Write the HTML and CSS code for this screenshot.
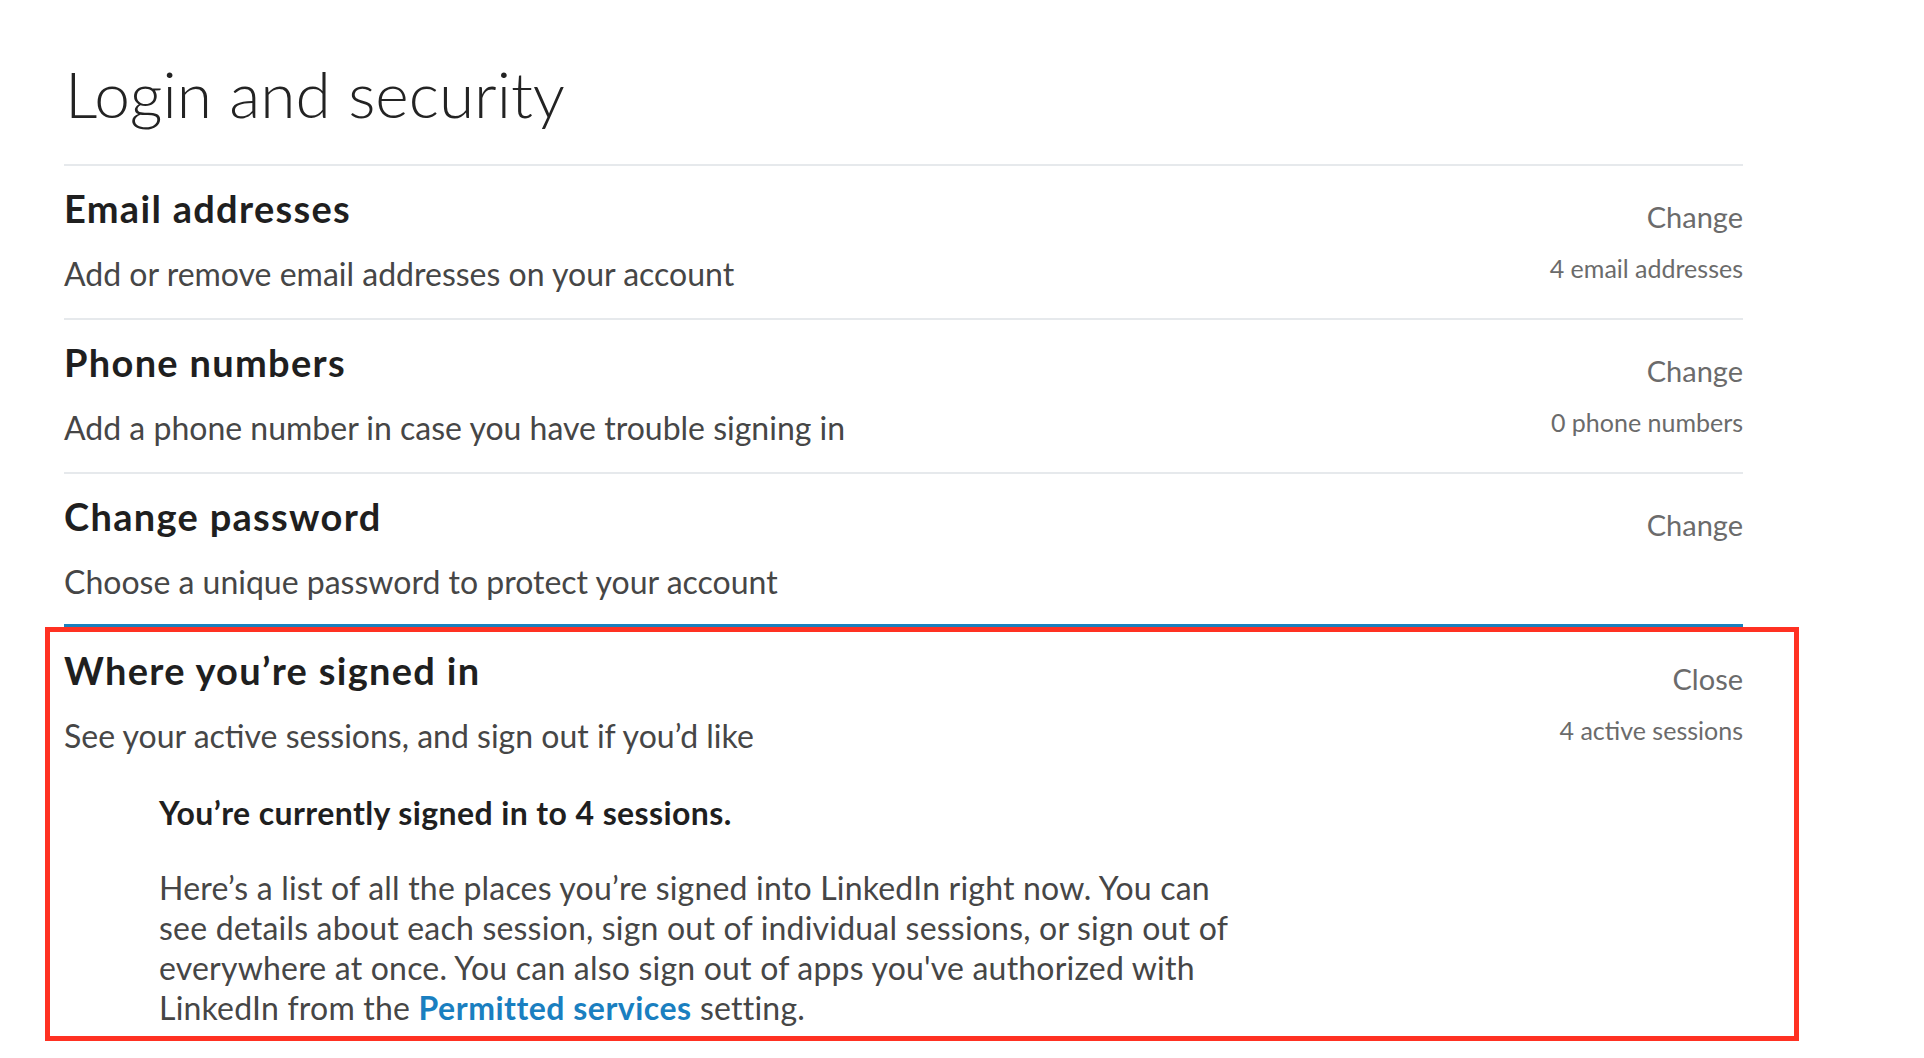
FILE: index.html
```html
<!DOCTYPE html>
<html lang="en">
<head>
<meta charset="utf-8">
<title>Login and security</title>
<link rel="stylesheet" href="styles.css">
</head>
<body>
<main class="page">
  <h1 class="page-title">Login and security</h1>

  <section class="setting">
    <div class="setting-text">
      <h2 class="setting-title">Email addresses</h2>
      <p class="setting-desc">Add or remove email addresses on your account</p>
    </div>
    <div class="setting-meta">
      <a class="setting-action">Change</a>
      <span class="setting-count">4 email addresses</span>
    </div>
  </section>

  <section class="setting">
    <div class="setting-text">
      <h2 class="setting-title">Phone numbers</h2>
      <p class="setting-desc">Add a phone number in case you have trouble signing in</p>
    </div>
    <div class="setting-meta">
      <a class="setting-action">Change</a>
      <span class="setting-count">0 phone numbers</span>
    </div>
  </section>

  <section class="setting setting-before-open">
    <div class="setting-text">
      <h2 class="setting-title">Change password</h2>
      <p class="setting-desc">Choose a unique password to protect your account</p>
    </div>
    <div class="setting-meta">
      <a class="setting-action">Change</a>
    </div>
  </section>

  <section class="setting-open">
    <div class="setting setting-head">
      <div class="setting-text">
        <h2 class="setting-title">Where you’re signed in</h2>
        <p class="setting-desc">See your active sessions, and sign out if you’d like</p>
      </div>
      <div class="setting-meta">
        <a class="setting-action">Close</a>
        <span class="setting-count">4 active sessions</span>
      </div>
    </div>
    <div class="sessions">
      <h3 class="sessions-title">You’re currently signed in to 4 sessions.</h3>
      <p class="sessions-text">Here’s a list of all the places you’re signed into LinkedIn right now. You can see details about each session, sign out of individual sessions, or sign out of everywhere at once. You can also sign out of apps you've authorized with LinkedIn from the <a class="link">Permitted services</a> setting.</p>
    </div>
    <div class="highlight"></div>
  </section>
</main>
</body>
</html>
```

FILE: styles.css
```css
html, body {
  margin: 0;
  padding: 0;
  background: #ffffff;
}

body {
  font-family: "Lato", "Source Sans Pro", "Noto Sans", sans-serif;
  color: #222222;
}

.page {
  width: 1679px;
  margin-left: 64px;
  padding-top: 54px;
}

.page-title {
  margin: 0;
  font-size: 64px;
  font-weight: 300;
  line-height: 80px;
  color: #232323;
  padding-left: 1px;
  padding-bottom: 30px;
  border-bottom: 2px solid #e6e9ec;
}

.setting {
  display: flex;
  justify-content: space-between;
  align-items: flex-start;
  padding: 20px 0 24px;
  border-bottom: 2px solid #e6e9ec;
}

.setting-text {
  display: flex;
  flex-direction: column;
  gap: 24px;
}

.setting-title {
  margin: 0;
  font-size: 38px;
  line-height: 44px;
  font-weight: 700;
  letter-spacing: 1.3px;
  color: #1f1f1f;
}

.setting-desc {
  margin: 0;
  font-size: 32px;
  line-height: 40px;
  font-weight: 400;
  color: #464646;
}

.setting-meta {
  display: flex;
  flex-direction: column;
  align-items: flex-end;
  gap: 17px;
  padding-top: 13px;
}

.setting-action {
  font-size: 29px;
  line-height: 36px;
  color: #6b6b6b;
}

.setting-count {
  font-size: 25px;
  line-height: 32px;
  color: #6b6b6b;
}

.setting-before-open {
  border-bottom: none;
  padding-bottom: 22px;
}

.setting-open {
  position: relative;
  border-top: 3px solid #1a80bd;
  padding-bottom: 13px;
}

.setting-head {
  border-bottom: none;
  padding-bottom: 0;
  padding-top: 21px;
}

.sessions {
  padding-left: 95px;
  padding-top: 39px;
}

.sessions-title {
  margin: 0;
  font-size: 32px;
  line-height: 36px;
  font-weight: 700;
  letter-spacing: 0.4px;
  color: #1f1f1f;
}

.sessions-text {
  margin: 37px 0 0;
  width: 1090px;
  font-size: 32px;
  line-height: 40px;
  letter-spacing: 0.2px;
  color: #464646;
}

.link {
  color: #1a7fc0;
  font-weight: 700;
  letter-spacing: 0.5px;
}

.highlight {
  position: absolute;
  top: 0;
  bottom: 0;
  left: -19px;
  right: -56px;
  border: 5px solid #ff3122;
  pointer-events: none;
}
```
